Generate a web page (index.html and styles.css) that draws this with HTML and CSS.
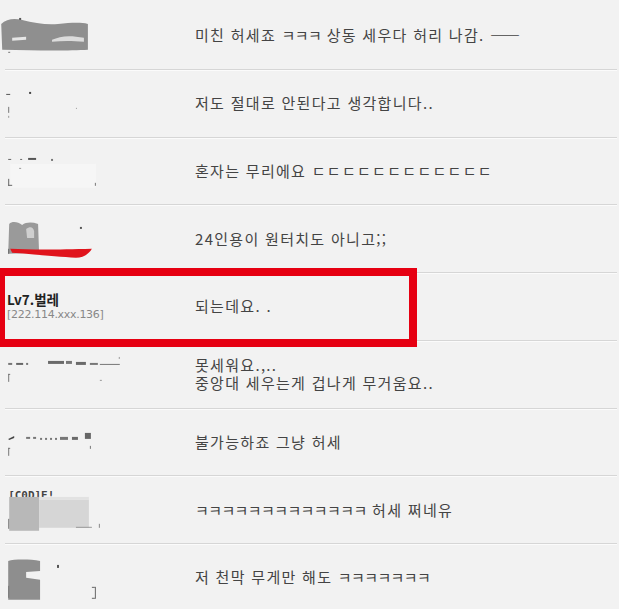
FILE: index.html
```html
<!DOCTYPE html>
<html lang="ko">
  <head>
    <meta charset="UTF-8" />
    <meta name="viewport" content="width=device-width, initial-scale=1.0" />
    <title>댓글</title>
    <link rel="stylesheet" href="styles.css">
  </head>
  <body>
    <div class="comments">
      <div class="row">
        <div class="nick">
          <svg class="blur" width="120" height="67" viewBox="0 0 120 67">
            <path d="M1 22 C6 17 14 16 22 18 C34 21 46 23 58 22 C70 21 80 20 88 22 L88 48 C70 49 40 49 2 48 Z" fill="#8f8f8f"/>
            <path d="M12 36 L26 35 L26 38 L12 39 Z" fill="#e6e6e6"/>
            <path d="M52 38 C60 34 70 33 84 36 L84 40 C72 39 62 39 52 40 Z" fill="#dcdcdc"/>
            <rect x="19" y="16" width="2" height="2" fill="#555"/>
            <rect x="8" y="50" width="2" height="1" fill="#777"/>
          </svg>
        </div>
        <div class="text">미친 허세죠 <span class="kk">ㅋㅋㅋ</span> 상동 세우다 허리 나감. ——</div>
      </div>
      <div class="row">
        <div class="nick">
          <svg class="blur" width="120" height="67" viewBox="0 0 120 67">
            <rect x="6" y="24" width="4" height="1" fill="#555"/>
            <rect x="29" y="22" width="2" height="2" fill="#444"/>
            <rect x="8" y="37" width="1" height="6" fill="#777"/>
            <rect x="8" y="46" width="1" height="2" fill="#999"/>
            <rect x="76" y="38" width="1" height="1" fill="#999"/>
          </svg>
        </div>
        <div class="text">저도 절대로 안된다고 생각합니다..</div>
      </div>
      <div class="row">
        <div class="nick">
          <svg class="blur" width="120" height="67" viewBox="0 0 120 67">
            <rect x="10" y="26" width="86" height="24" fill="#f6f6f6"/>
            <rect x="8" y="21" width="3" height="1" fill="#666"/>
            <rect x="20" y="21" width="2" height="1" fill="#666"/>
            <rect x="28" y="20" width="8" height="2" fill="#555"/>
            <rect x="51" y="21" width="2" height="2" fill="#777"/>
            <rect x="19" y="30" width="2" height="1" fill="#999"/>
            <rect x="8" y="41" width="1" height="7" fill="#666"/>
            <rect x="8" y="47" width="4" height="1" fill="#666"/>
            <rect x="95" y="45" width="1" height="3" fill="#777"/>
          </svg>
        </div>
        <div class="text">혼자는 무리에요 ㄷㄷㄷㄷㄷㄷㄷㄷㄷㄷㄷㄷ</div>
      </div>
      <div class="row">
        <div class="nick">
          <svg class="blur" width="120" height="67" viewBox="0 0 120 67">
            <path d="M9 19 C12 16 18 17 22 20 C26 17 32 17 38 19 L39 48 L8 49 Z" fill="#9a9a9a"/>
            <path d="M26 24 C30 21 33 22 34 26 L34 33 L27 33 Z" fill="#cfcfcf"/>
            <path d="M10 44 C30 45 55 45 92 44 C89 49 84 53 76 53 C60 52 40 50 12 48 Z" fill="#e0141c"/>
            <rect x="80" y="22" width="2" height="2" fill="#555"/>
            <rect x="8" y="44" width="1" height="5" fill="#666"/>
          </svg>
        </div>
        <div class="text">24인용이 원터치도 아니고;;</div>
      </div>
      <div class="row">
        <div class="nick">
          <div class="name">Lv7.벌레</div>
          <div class="ip">[222.114.xxx.136]</div>
        </div>
        <div class="text">되는데요. .</div>
      </div>
      <div class="row">
        <div class="nick">
          <svg class="blur" width="120" height="67" viewBox="0 0 120 67">
            <rect x="8" y="22" width="4" height="2" fill="#777"/>
            <rect x="16" y="22" width="7" height="2" fill="#666"/>
            <rect x="26" y="22" width="2" height="2" fill="#777"/>
            <rect x="48" y="20" width="16" height="3" fill="#6a6a6a"/>
            <rect x="66" y="20" width="6" height="3" fill="#777"/>
            <rect x="76" y="21" width="10" height="3" fill="#6a6a6a"/>
            <rect x="90" y="22" width="8" height="2" fill="#777"/>
            <rect x="100" y="23" width="20" height="1" fill="#777"/>
            <rect x="119" y="16" width="1" height="2" fill="#999"/>
            <rect x="8" y="33" width="1" height="8" fill="#777"/>
            <rect x="8" y="33" width="2" height="1" fill="#777"/>
            <rect x="100" y="39" width="2" height="1" fill="#999"/>
          </svg>
        </div>
        <div class="text">
          <div class="line">못세워요.,..</div>
          <div class="line">중앙대 세우는게 겁나게 무거움요..</div>
        </div>
      </div>
      <div class="row">
        <div class="nick">
          <svg class="blur" width="120" height="67" viewBox="0 0 120 67">
            <path d="M8 30 L14 27 L14 29 L9 31 Z" fill="#444"/>
            <rect x="26" y="28" width="4" height="2" fill="#777"/>
            <rect x="33" y="28" width="3" height="2" fill="#777"/>
            <rect x="40" y="29" width="2" height="2" fill="#777"/>
            <rect x="45" y="29" width="2" height="2" fill="#777"/>
            <rect x="50" y="29" width="2" height="2" fill="#777"/>
            <rect x="55" y="29" width="2" height="2" fill="#777"/>
            <rect x="60" y="28" width="8" height="3" fill="#777"/>
            <rect x="72" y="28" width="6" height="3" fill="#6a6a6a"/>
            <rect x="85" y="24" width="6" height="6" fill="#666"/>
            <rect x="8" y="39" width="1" height="8" fill="#777"/>
            <rect x="8" y="39" width="2" height="1" fill="#777"/>
            <rect x="90" y="37" width="1" height="3" fill="#777"/>
          </svg>
        </div>
        <div class="text">불가능하죠 그냥 허세</div>
      </div>
      <div class="row">
        <div class="nick">
          <svg class="blur" width="120" height="67" viewBox="0 0 120 67">
            <text x="8" y="23" class="frag">[C0D]E!..</text>
            <rect x="9" y="21" width="30" height="34" fill="#b8b8b8"/>
            <rect x="39" y="24" width="50" height="28" fill="#d6d6d6"/>
            <rect x="39" y="21" width="50" height="3" fill="#e2e2e2"/>
            <rect x="8" y="43" width="1" height="10" fill="#777"/>
            <rect x="76" y="51" width="16" height="1" fill="#999"/>
            <rect x="99" y="48" width="1" height="4" fill="#888"/>
          </svg>
        </div>
        <div class="text"><span class="kk">ㅋㅋㅋㅋㅋㅋㅋㅋㅋㅋㅋㅋㅋ</span> 허세 쩌네유</div>
      </div>
      <div class="row">
        <div class="nick">
          <svg class="blur" width="120" height="67" viewBox="0 0 120 67">
            <path d="M8 17 C14 15 30 15 40 17 L40 27 L26 28 L26 34 L40 36 L40 56 L8 56 Z" fill="#8e8e8e"/>
            <rect x="57" y="21" width="2" height="3" fill="#555"/>
            <rect x="8" y="42" width="1" height="12" fill="#777"/>
            <rect x="95" y="43" width="1" height="12" fill="#666"/>
            <rect x="92" y="43" width="3" height="1" fill="#666"/>
            <rect x="92" y="54" width="3" height="1" fill="#666"/>
          </svg>
        </div>
        <div class="text">저 천막 무게만 해도 <span class="kk">ㅋㅋㅋㅋㅋㅋㅋ</span></div>
      </div>
      <div class="mark"></div>
    </div>
  </body>
</html>
```

FILE: styles.css
```css
body {
  margin: 0;
  background-color: #f2f2f2;
  font-family: "Noto Sans CJK KR", "Noto Sans", sans-serif;
  color: #444;
}

.comments {
  position: relative;
  padding: 2px 2px 0 5px;
}

.row {
  display: flex;
  align-items: center;
  height: 66.75px;
  border-bottom: 1px solid #d6d6d6;
  box-shadow: 0 1px 0 #fbfbfb;
}

.nick {
  width: 188px;
  flex-shrink: 0;
  padding-left: 2px;
  height: 100%;
  display: flex;
  flex-direction: column;
  justify-content: center;
}

.blur {
  display: block;
  margin-left: -7px;
}

.frag {
  font-size: 11px;
  font-weight: bold;
  fill: #444;
  font-family: "DejaVu Sans Mono", monospace;
}

.name {
  font-size: 13.5px;
  font-weight: bold;
  color: #222;
  line-height: 17px;
}

.ip {
  font-size: 11px;
  color: #888;
  line-height: 14px;
  font-family: "DejaVu Sans", sans-serif;
  letter-spacing: -0.3px;
}

.text {
  font-size: 15px;
  line-height: 18px;
  letter-spacing: 1.3px;
}

.kk {
  letter-spacing: -0.6px;
}

.line {
  height: 18px;
}

.mark {
  position: absolute;
  left: -3px;
  top: 268px;
  width: 404px;
  height: 63px;
  border: 8px solid #e60012;
}
```
